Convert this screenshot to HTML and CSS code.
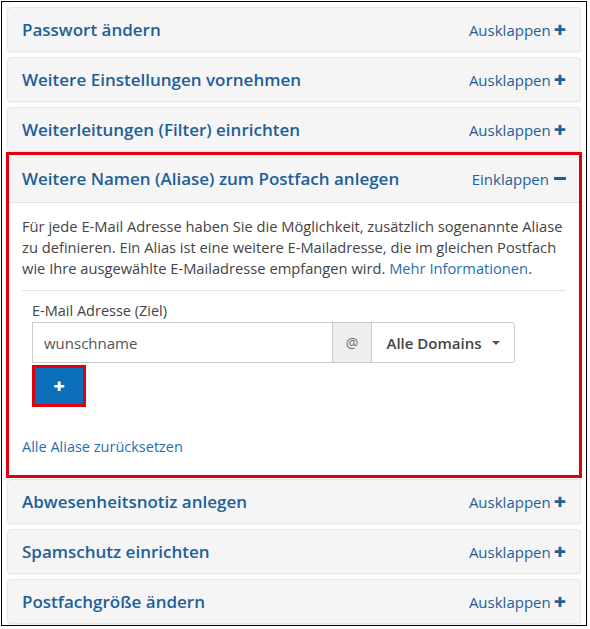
FILE: index.html
```html
<!DOCTYPE html>
<html lang="de">
<head>
<meta charset="utf-8">
<link rel="stylesheet" href="styles.css">
</head>
<body>
<div class="frame">
  <div class="panel">
    <div class="panel-head"><span class="title">Passwort ändern</span><span class="toggle">Ausklappen <span class="plus">+</span></span></div>
  </div>
  <div class="panel">
    <div class="panel-head"><span class="title">Weitere Einstellungen vornehmen</span><span class="toggle">Ausklappen <span class="plus">+</span></span></div>
  </div>
  <div class="panel">
    <div class="panel-head"><span class="title">Weiterleitungen (Filter) einrichten</span><span class="toggle">Ausklappen <span class="plus">+</span></span></div>
  </div>
  <div class="panel active">
    <div class="panel-head open"><span class="title">Weitere Namen (Aliase) zum Postfach anlegen</span><span class="toggle">Einklappen <span class="minus"></span></span></div>
    <div class="panel-body">
      <p class="intro">Für jede E-Mail Adresse haben Sie die Möglichkeit, zusätzlich sogenannte Aliase zu definieren. Ein Alias ist eine weitere E-Mailadresse, die im gleichen Postfach wie Ihre ausgewählte E-Mailadresse empfangen wird. <a class="link" href="#">Mehr Informationen</a>.</p>
      <hr class="sep">
      <div class="form">
        <label class="label">E-Mail Adresse (Ziel)</label>
        <div class="input-group">
          <div class="input">wunschname</div>
          <div class="addon">@</div>
          <div class="select">Alle Domains <span class="caret"></span></div>
        </div>
        <div class="add-wrap"><button class="add">+</button></div>
      </div>
      <a class="link reset" href="#">Alle Aliase zurücksetzen</a>
    </div>
  </div>
  <div class="panel">
    <div class="panel-head"><span class="title">Abwesenheitsnotiz anlegen</span><span class="toggle">Ausklappen <span class="plus">+</span></span></div>
  </div>
  <div class="panel">
    <div class="panel-head"><span class="title">Spamschutz einrichten</span><span class="toggle">Ausklappen <span class="plus">+</span></span></div>
  </div>
  <div class="panel">
    <div class="panel-head"><span class="title">Postfachgröße ändern</span><span class="toggle">Ausklappen <span class="plus">+</span></span></div>
  </div>
</div>
</body>
</html>
```
FILE: styles.css
```css
html, body {
  margin: 0;
  padding: 0;
  background: #fff;
}
body {
  font-family: "Open Sans", "Noto Sans", sans-serif;
  color: #444;
}
.frame {
  box-sizing: border-box;
  margin: 1px 0 0 1px;
  width: 586px;
  height: 625px;
  border: 1px solid #000;
  padding: 5px 5px 0 5px;
  display: flex;
  flex-direction: column;
  gap: 5px;
}
.panel {
  box-sizing: border-box;
  background: #f5f5f5;
  border: 1px solid #e6e6e6;
  border-radius: 4px;
  box-shadow: 0 1px 1px rgba(0,0,0,0.06);
}
.panel-head {
  box-sizing: border-box;
  height: 43px;
  display: flex;
  align-items: center;
  justify-content: space-between;
  padding: 0 14px 0 14px;
}
.title {
  font-size: 17px;
  font-weight: 600;
  color: #1e5f98;
}
.toggle {
  font-size: 15px;
  color: #1e5f98;
  display: flex;
  align-items: center;
  gap: 3px;
}
.plus {
  font-weight: 800;
  font-size: 21px;
  line-height: 1;
}
.minus {
  display: inline-block;
  width: 12px;
  height: 3px;
  background: #1e5f98;
  margin-left: 2px;
}
.panel.active {
  margin: -5px -1px -4px -1px;
  border: 3px solid #e0000f;
  border-radius: 0;
  background: #fff;
  box-shadow: none;
}
.panel-head.open {
  height: 48px;
  background: #f5f5f5;
  border-bottom: 1px solid #e3e3e3;
  padding: 0 13px 0 13px;
}
.panel-body {
  padding: 13px 13px 18px 13px;
}
.intro {
  margin: 0;
  font-size: 14.7px;
  line-height: 21px;
  color: #444;
}
.link {
  color: #1f6fb2;
  text-decoration: none;
}
.sep {
  border: 0;
  border-top: 1px solid #e5e5e5;
  margin: 11px 0 10px 0;
}
.form {
  padding-left: 10px;
}
.label {
  display: block;
  font-size: 14.5px;
  line-height: 20px;
  color: #444;
  margin-bottom: 1px;
}
.input-group {
  display: flex;
  height: 41px;
  width: 483px;
}
.input {
  box-sizing: border-box;
  width: 300px;
  border: 1px solid #ccc;
  border-right: 0;
  padding: 0 11px;
  display: flex;
  align-items: center;
  font-size: 15px;
  color: #555;
}
.addon {
  box-sizing: border-box;
  width: 39px;
  background: #eee;
  border: 1px solid #ccc;
  border-right: 0;
  display: flex;
  align-items: center;
  justify-content: center;
  font-size: 14px;
  color: #666;
}
.select {
  box-sizing: border-box;
  width: 144px;
  border: 1px solid #ccc;
  border-radius: 0 3px 3px 0;
  display: flex;
  align-items: center;
  justify-content: center;
  gap: 10px;
  font-size: 15px;
  font-weight: 600;
  color: #444;
  background: #fff;
}
.caret {
  width: 0;
  height: 0;
  border-left: 4px solid transparent;
  border-right: 4px solid transparent;
  border-top: 4px solid #555;
}
.add-wrap {
  margin-top: 2px;
  width: 54px;
  height: 42px;
  box-sizing: border-box;
  border: 3px solid #e0000f;
}
.add {
  display: block;
  width: 48px;
  height: 36px;
  border: 0;
  background: #0a6fb8;
  color: #fff;
  font-family: "Open Sans", sans-serif;
  font-size: 20px;
  font-weight: 800;
  line-height: 1;
  padding: 0;
}
.reset {
  display: block;
  margin-top: 30px;
  font-size: 14.5px;
  line-height: 20px;
}
```
